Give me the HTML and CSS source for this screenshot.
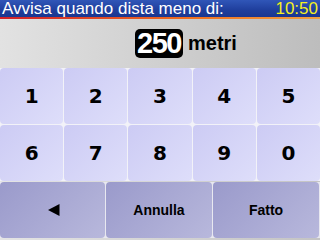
FILE: index.html
```html
<!DOCTYPE html>
<html>
<head>
<meta charset="utf-8">
<link rel="stylesheet" href="styles.css">
</head>
<body>
<div class="screen">
  <div class="header">
    <span class="title">Avvisa quando dista meno di:</span>
    <span class="clock">10:50</span>
  </div>
  <div class="display">
    <span class="value">250</span>
    <span class="unit">metri</span>
  </div>
  <div class="keypad">
    <div class="key">1</div>
    <div class="key">2</div>
    <div class="key">3</div>
    <div class="key">4</div>
    <div class="key">5</div>
    <div class="key">6</div>
    <div class="key">7</div>
    <div class="key">8</div>
    <div class="key">9</div>
    <div class="key">0</div>
  </div>
  <div class="actions">
    <div class="action"><svg class="back" width="12" height="12" viewBox="0 0 12 12"><polygon points="11.5,0 11.5,12 0,6" fill="#000"/></svg></div>
    <div class="action">Annulla</div>
    <div class="action">Fatto</div>
  </div>
</div>
</body>
</html>
```
FILE: styles.css
```css
html, body {
  margin: 0;
  padding: 0;
  background: #c8c8c8;
}
.screen {
  width: 320px;
  height: 240px;
  overflow: hidden;
  display: flex;
  flex-direction: column;
  font-family: "DejaVu Sans", Verdana, sans-serif;
  background: linear-gradient(90deg, #e4e4e4, #c4c4c4);
}
.header {
  height: 17px;
  display: flex;
  align-items: center;
  justify-content: space-between;
  padding: 0 2px 0 2px;
  font-family: "Liberation Sans", Arial, sans-serif;
  background: linear-gradient(180deg, #3056b8 0%, #1f3e9c 60%, #1a3690 100%);
  border-bottom: 2px solid #e8622a;
  border-image: linear-gradient(90deg, #d0202a, #f07020 60%, #f0a040) 1;
}
.title {
  color: #fff;
  font-size: 17px;
  line-height: 17px;
}
.clock {
  color: #f4f020;
  font-size: 17px;
  line-height: 17px;
}
.display {
  height: 49px;
  display: flex;
  align-items: center;
  justify-content: center;
  gap: 5px;
  padding-left: 52px;
  background: linear-gradient(90deg, #e2e2e2, #bdbdbd);
}
.value {
  background: #000;
  color: #fff;
  font-family: "Liberation Sans", Arial, sans-serif;
  font-weight: bold;
  font-size: 29px;
  line-height: 29px;
  padding: 0 2px;
  border-radius: 5px;
  letter-spacing: -1.5px;
}
.unit {
  font-family: "Liberation Sans", Arial, sans-serif;
  font-weight: bold;
  font-size: 20px;
  color: #000;
}
.keypad {
  display: grid;
  grid-template-columns: repeat(5, 1fr);
  grid-template-rows: 56px 56px;
  gap: 1px;
  background: #f2f2f8;
}
.key {
  display: flex;
  align-items: center;
  justify-content: center;
  font-weight: bold;
  font-size: 20px;
  color: #000;
  border-radius: 4px;
  background: linear-gradient(135deg, #cccbf4, #dedefa);
}
.actions {
  margin-top: 1px;
  display: grid;
  grid-template-columns: 105px 106px 106px;
  gap: 1px;
  height: 56px;
  background: #e8e8f0;
}
.action {
  display: flex;
  align-items: center;
  justify-content: center;
  font-family: "Liberation Sans", Arial, sans-serif;
  font-weight: bold;
  font-size: 14px;
  color: #000;
  border-radius: 4px;
  background: linear-gradient(135deg, #9a9acb, #b8b8dc);
}
.back {
  margin-left: 2px;
}
```
